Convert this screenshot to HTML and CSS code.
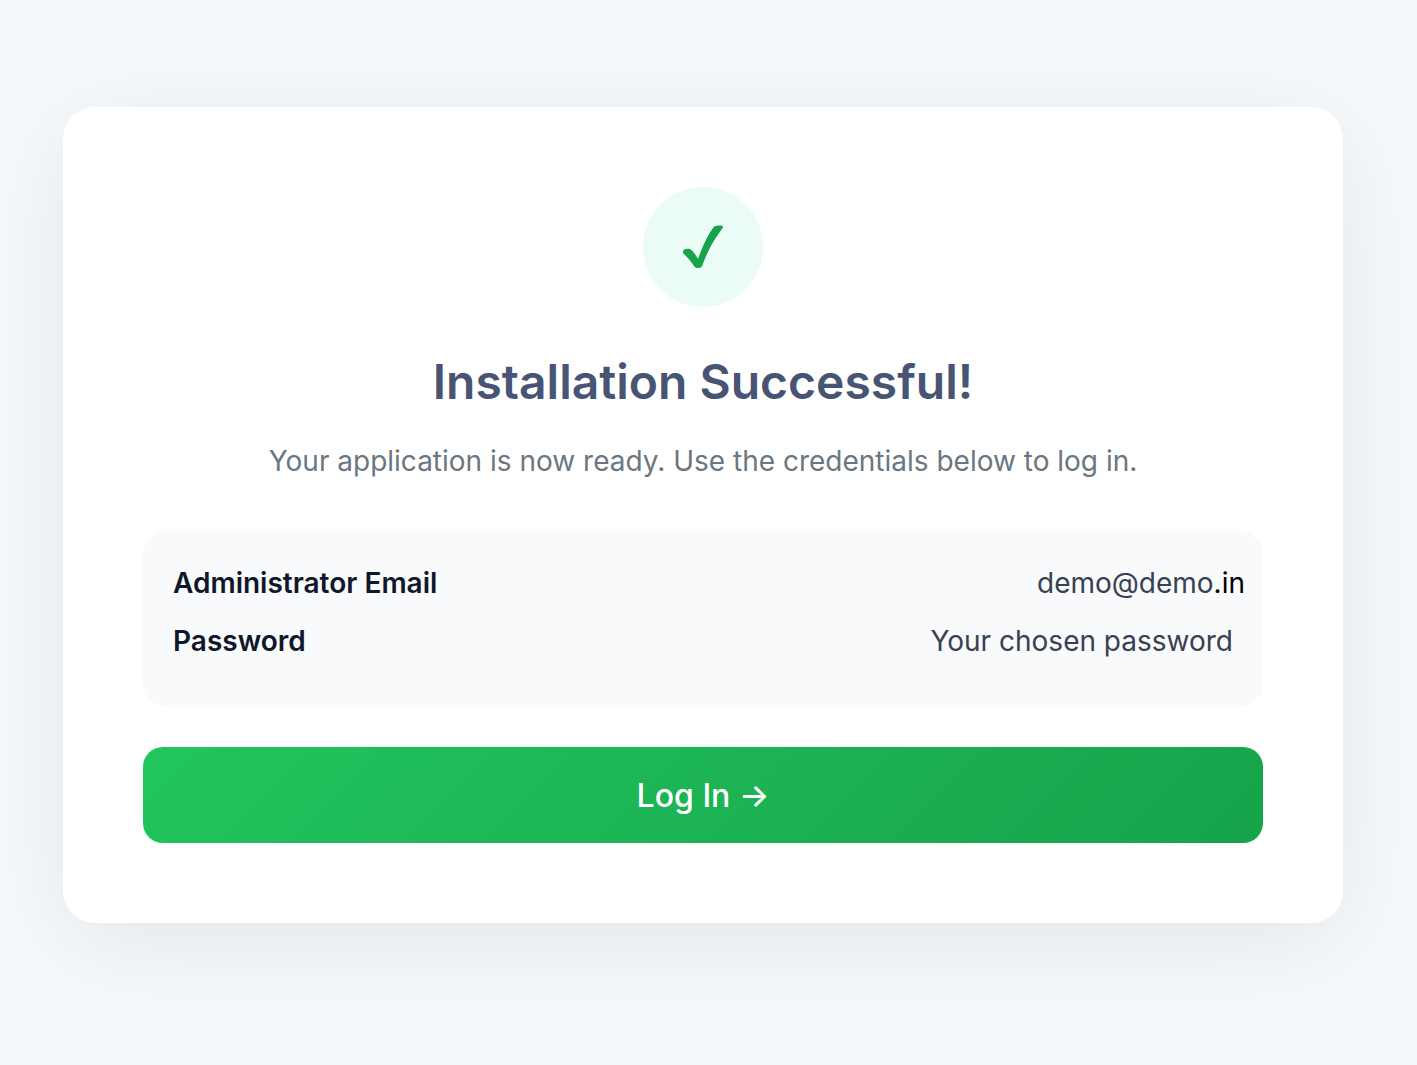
FILE: index.html
```html
<!DOCTYPE html>
<html lang="en">
<head>
    <meta charset="UTF-8">
    <meta name="viewport" content="width=device-width, initial-scale=1.0">
    <title>Installation Successful</title>
    <link rel="stylesheet" href="styles.css">
</head>
<body>
<main class="card">
    <div class="success-icon">
        <svg width="44" height="48" viewBox="0 0 44 48" aria-hidden="true">
            <path d="M2 28 C3 26 6 25.500 9 26 C12 28 15 32 17 36 C21 25 26 13 32 5 C34 2.500 38 2 41.500 3 C42.500 3.500 42 5 41 6 C34 15 26 29 21.500 42 C21 44 20 45 17 45 C15 45 14 44.500 13 43 C10 38 6 34 2 30 Z" fill="#16a34a"/>
        </svg>
    </div>
    <h1>Installation Successful!</h1>
    <p class="subtitle">Your application is now ready. Use the credentials below to log in.</p>

    <dl class="credentials">
        <div class="row row-email">
            <dt>Administrator Email</dt>
            <dd>demo@demo<span class="tld">.in</span></dd>
        </div>
        <div class="row">
            <dt>Password</dt>
            <dd>Your chosen password</dd>
        </div>
    </dl>

    <a class="login-btn" href="#login">Log In →</a>
</main>
</body>
</html>
```

FILE: styles.css
```css
* {
    box-sizing: border-box;
}

body {
    font-family: Inter, sans-serif;
    background-color: #f5f9fc;
    color: #0f172a;
    margin: 0;
    padding: 107px 74px 107px 63px;
}

.card {
    background-color: #ffffff;
    border-radius: 32px;
    box-shadow: 0 20px 100px rgba(0, 0, 0, 0.08);
    max-width: 1280px;
    margin: 0 auto;
    padding: 80px;
    text-align: center;
}

.success-icon {
    display: flex;
    justify-content: center;
    align-items: center;
    width: 120px;
    height: 120px;
    margin: 0 auto 40px;
    border-radius: 50%;
    background-color: #eafcf5;
}

h1 {
    margin: 0 0 22px;
    font-size: 48px;
    font-weight: 600;
    line-height: 70px;
    color: #475473;
}

.subtitle {
    margin: 0 0 48px;
    font-size: 28px;
    line-height: 44px;
    color: #6b7780;
}

.credentials {
    margin: 0 0 40px;
    padding: 30px 0 44px;
    border-radius: 24px;
    background-color: #f9fafc;
    font-size: 28px;
    line-height: 44px;
}

.row {
    display: flex;
    justify-content: space-between;
    padding: 0 30px;
}

.row + .row {
    margin-top: 14px;
}

.row-email {
    padding-right: 18px;
}

dt {
    font-weight: 600;
}

dd {
    margin: 0;
    color: #374151;
}

.tld {
    color: #000000;
}

.login-btn {
    display: block;
    padding: 25px 24px 23px;
    border-radius: 20px;
    background: linear-gradient(135deg, #22c55e, #16a34a);
    color: #ffffff;
    font-size: 32px;
    font-weight: 500;
    line-height: 48px;
    text-decoration: none;
}
```
